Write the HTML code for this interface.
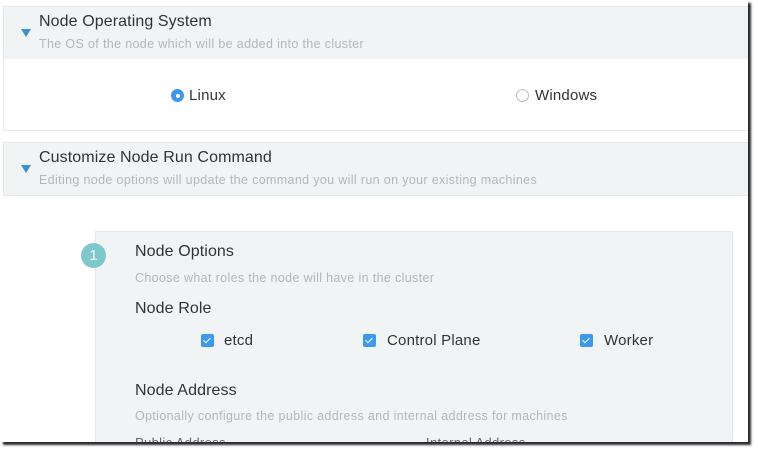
<!DOCTYPE html>
<html><head><style>
html,body{margin:0;padding:0;background:#fff;width:758px;height:452px;overflow:hidden}
body{font-family:"Liberation Sans",sans-serif;color:#3d3d3d}
#c{position:absolute;left:0;top:0;width:748px;height:442px;overflow:hidden;background:#fff;box-shadow:3px 3px 2px #2a2a2a}
.hd{position:absolute;left:3px;width:760px;height:52px;background:#f1f4f5;border:1px solid #e3e7ea}
.t{position:absolute;left:35px;font-size:16px;color:#333;letter-spacing:0.1px}
.s{position:absolute;left:35px;font-size:12.5px;color:#b3b7ba;letter-spacing:0.35px}
.tri{position:absolute;left:17px;width:0;height:0;border-left:5px solid transparent;border-right:5px solid transparent;border-top:8px solid #3d8fd6}
.body1{position:absolute;left:3px;top:59px;width:760px;height:71px;border:1px solid #e8ecee;border-top:none;background:#fff}
.r{position:absolute;font-size:15px;color:#333;letter-spacing:0.2px}
.box{position:absolute;left:95px;top:231px;width:636px;height:230px;background:#f1f4f5;border:1px solid #e3e7ea}
.cb{position:absolute;width:13px;height:13px;background:#3d98f0;border-radius:2px}
.cb:after{content:"";position:absolute;left:4px;top:1.5px;width:3px;height:6px;border:solid #fff;border-width:0 1.5px 1.5px 0;transform:rotate(45deg)}
</style></head><body><div id="c">
<div class="hd" style="top:6px"><div class="tri" style="top:22px"></div>
<div class="t" style="top:6px">Node Operating System</div>
<div class="s" style="top:30px">The OS of the node which will be added into the cluster</div></div>
<div class="body1">
<div style="position:absolute;left:167px;top:30px;width:13px;height:13px;border-radius:50%;background:#3d98f0"><div style="position:absolute;left:4.5px;top:4.5px;width:4px;height:4px;border-radius:50%;background:#fff"></div></div>
<div class="r" style="left:185px;top:28px">Linux</div>
<div style="position:absolute;left:512px;top:30px;width:11px;height:11px;border-radius:50%;border:1px solid #bbb;background:#fff"></div>
<div class="r" style="left:531px;top:28px">Windows</div>
</div>
<div class="hd" style="top:142px"><div class="tri" style="top:22px"></div>
<div class="t" style="top:6px">Customize Node Run Command</div>
<div class="s" style="top:30px">Editing node options will update the command you will run on your existing machines</div></div>
<div class="box">
<div class="t" style="left:39px;top:11px">Node Options</div>
<div class="s" style="left:39px;top:39px">Choose what roles the node will have in the cluster</div>
<div class="t" style="left:39px;top:68px">Node Role</div>
<div class="cb" style="left:105px;top:102px"></div><div class="r" style="left:128px;top:100px">etcd</div>
<div class="cb" style="left:267px;top:102px"></div><div class="r" style="left:291px;top:100px">Control Plane</div>
<div class="cb" style="left:484px;top:102px"></div><div class="r" style="left:508px;top:100px">Worker</div>
<div class="t" style="left:39px;top:150px">Node Address</div>
<div class="s" style="left:39px;top:177px">Optionally configure the public address and internal address for machines</div>
<div class="s" style="left:39px;top:203px;color:#666;font-size:13px">Public Address</div>
<div class="s" style="left:330px;top:203px;color:#666;font-size:13px">Internal Address</div>
</div>
<div style="position:absolute;left:81px;top:243px;width:25px;height:25px;border-radius:50%;background:#7cc8cc;color:#fff;font-size:15px;text-align:center;line-height:25px">1</div>
</div></body></html>
